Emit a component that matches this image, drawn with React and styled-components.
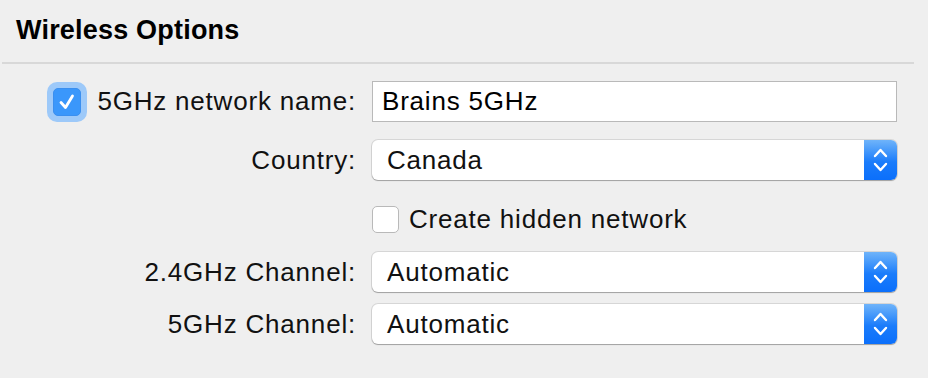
import React from 'react'
import styled, { createGlobalStyle } from 'styled-components'

const GlobalStyle = createGlobalStyle`
  html, body {
    margin: 0;
    background: #efefef;
  }
  body {
    font-family: "Liberation Sans", Arial, sans-serif;
  }
`

const Panel = styled.div`
  width: 928px;
  height: 378px;
  background: #efefef;
`

const Header = styled.div`
  padding: 17px 16px 18px;
`

const Title = styled.h2`
  margin: 0;
  font-size: 27px;
  line-height: 27px;
  font-weight: bold;
  letter-spacing: 0.2px;
  color: #000;
`

const Divider = styled.div`
  height: 2px;
  margin: 0 14px 0 2px;
  background: #d8d8d8;
`

const Form = styled.div`
  display: flex;
  flex-direction: column;
`

const Row = styled.div`
  display: flex;
  align-items: center;
  height: ${(p) => p.$height}px;
  margin-top: ${(p) => p.$top}px;
`

const LabelCell = styled.div`
  width: 356px;
  display: flex;
  align-items: center;
  justify-content: flex-end;
`

const FieldCell = styled.div`
  width: 525px;
  margin-left: 16px;
  height: 100%;
  display: flex;
  align-items: center;
`

const Label = styled.span`
  font-size: 26px;
  letter-spacing: 0.8px;
  color: #111;
  white-space: nowrap;
`

const FocusRing = styled.span`
  width: 40px;
  height: 40px;
  box-sizing: border-box;
  border-radius: 10px;
  background: #9dc9f9;
  display: flex;
  align-items: center;
  justify-content: center;
  margin-right: 10px;
`

const Box = styled.span`
  width: ${(p) => (p.$checked ? 28 : 27)}px;
  height: ${(p) => (p.$checked ? 28 : 27)}px;
  box-sizing: border-box;
  border-radius: 5px;
  display: flex;
  align-items: center;
  justify-content: center;
  flex-shrink: 0;
  background: ${(p) => (p.$checked ? '#3a97fb' : '#fff')};
  border: 1px solid ${(p) => (p.$checked ? '#3a8ff0' : '#b9b9b9')};
`

const CheckRow = styled.label`
  display: flex;
  align-items: center;
  gap: 10px;
`

const TextField = styled.div`
  width: 100%;
  height: 41px;
  box-sizing: border-box;
  border: 1px solid #b9b9b9;
  background: #fff;
  padding-left: 9px;
  display: flex;
  align-items: center;
  font-size: 26px;
  letter-spacing: 0.8px;
  color: #000;
`

const Select = styled.div`
  width: 100%;
  height: 40px;
  box-sizing: border-box;
  border-radius: 6px;
  background: #fff;
  display: flex;
  align-items: stretch;
  box-shadow: 0 0 0 1px rgba(0, 0, 0, 0.1), 0 1px 1px rgba(0, 0, 0, 0.25);
  overflow: hidden;
`

const SelectText = styled.span`
  flex: 1;
  display: flex;
  align-items: center;
  padding-left: 15px;
  font-size: 26px;
  letter-spacing: 0.8px;
  color: #111;
`

const Stepper = styled.span`
  width: 33px;
  background: linear-gradient(#6fb4fa, #1a7cfb 55%, #0b6ffb);
  display: flex;
  align-items: center;
  justify-content: center;
`

const Check = () => (
  <svg width="22" height="22" viewBox="0 0 22 22">
    <path
      d="M5 11.5 L9.5 16.5 L16.5 5"
      fill="none"
      stroke="#fff"
      strokeWidth="2.8"
      strokeLinecap="round"
      strokeLinejoin="round"
    />
  </svg>
)

const Chevrons = () => (
  <svg width="33" height="40" viewBox="0 0 33 40">
    <g fill="none" stroke="#fff" strokeWidth="2.4" strokeLinecap="round" strokeLinejoin="round">
      <path d="M11 16 L16.5 10 L22 16" />
      <path d="M11 24 L16.5 30 L22 24" />
    </g>
  </svg>
)

const PopUp = ({ value }) => (
  <Select>
    <SelectText>{value}</SelectText>
    <Stepper>
      <Chevrons />
    </Stepper>
  </Select>
)

export default function App() {
  return (
    <Panel>
      <GlobalStyle />
      <Header>
        <Title>Wireless Options</Title>
      </Header>
      <Divider />
      <Form>
        <Row $top={17} $height={41}>
          <LabelCell>
            <FocusRing>
              <Box $checked>
                <Check />
              </Box>
            </FocusRing>
            <Label>5GHz network name:</Label>
          </LabelCell>
          <FieldCell>
            <TextField>Brains 5GHz</TextField>
          </FieldCell>
        </Row>
        <Row $top={18} $height={40}>
          <LabelCell>
            <Label>Country:</Label>
          </LabelCell>
          <FieldCell>
            <PopUp value="Canada" />
          </FieldCell>
        </Row>
        <Row $top={26} $height={27}>
          <LabelCell />
          <FieldCell>
            <CheckRow>
              <Box />
              <Label>Create hidden network</Label>
            </CheckRow>
          </FieldCell>
        </Row>
        <Row $top={19} $height={40}>
          <LabelCell>
            <Label>2.4GHz Channel:</Label>
          </LabelCell>
          <FieldCell>
            <PopUp value="Automatic" />
          </FieldCell>
        </Row>
        <Row $top={12} $height={40}>
          <LabelCell>
            <Label>5GHz Channel:</Label>
          </LabelCell>
          <FieldCell>
            <PopUp value="Automatic" />
          </FieldCell>
        </Row>
      </Form>
    </Panel>
  )
}
